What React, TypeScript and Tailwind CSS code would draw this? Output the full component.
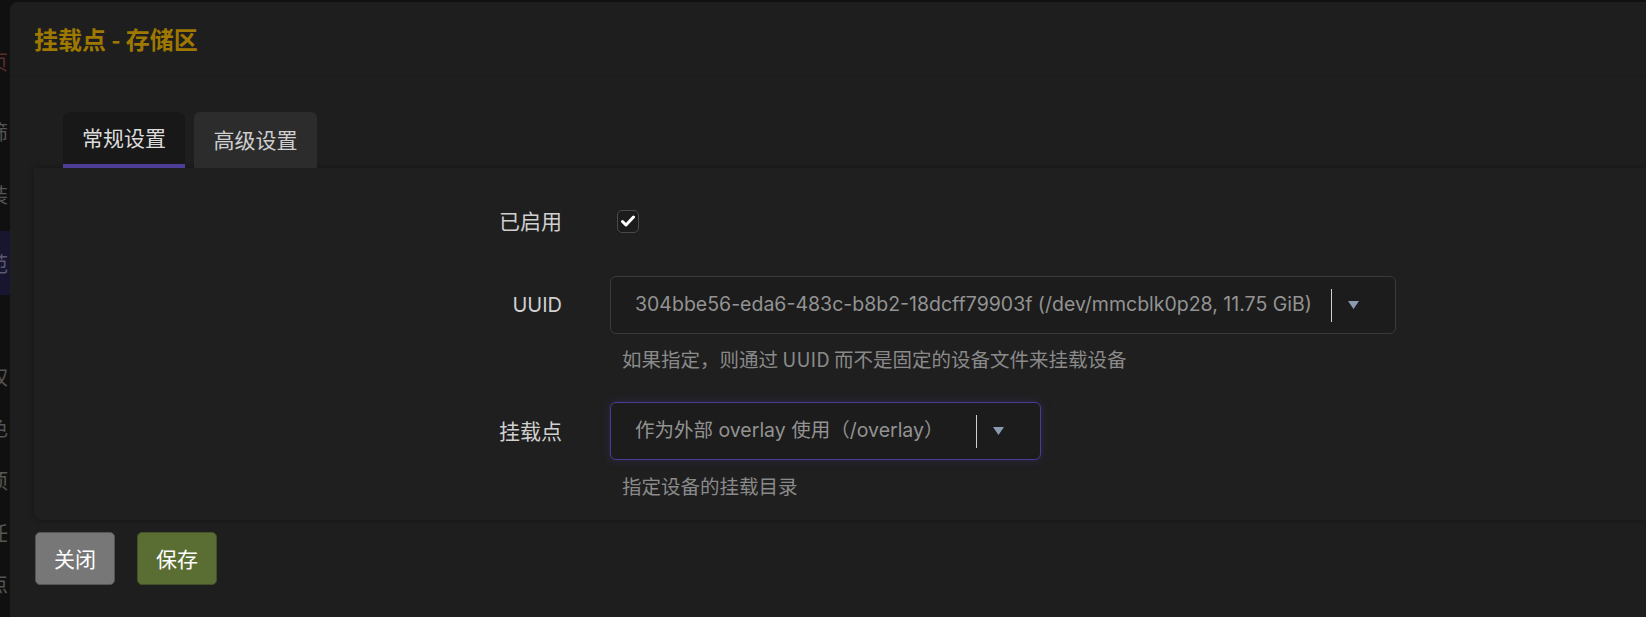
import React from 'react';

const cjk = "'Noto Sans CJK SC', 'Noto Sans', sans-serif";
const latin = "Inter, 'Noto Sans CJK SC', sans-serif";

// glyphs of the sidebar menu that peek out from under the modal
const sideItems: { ch: string; mt: number; color: string; active?: boolean }[] = [
  { ch: '页', mt: 49, color: '#5a2f2f' },
  { ch: '筛', mt: 48, color: '#555' },
  { ch: '装', mt: 41, color: '#555' },
  { ch: '范', mt: 25, color: '#5a5a6e', active: true },
  { ch: '权', mt: 71, color: '#555' },
  { ch: '色', mt: 29, color: '#555' },
  { ch: '项', mt: 31, color: '#555' },
  { ch: '任', mt: 30, color: '#555' },
  { ch: '点', mt: 29, color: '#555' },
];

const Arrow = () => (
  <svg width="11" height="8" viewBox="0 0 11 8">
    <polygon points="0,0 11,0 5.5,8" fill="#8a9ab3" />
  </svg>
);

const Select: React.FC<{ text: string; width: string; focused?: boolean }> = ({ text, width, focused }) => (
  <div
    className={`flex h-[58px] items-center rounded-[6px] border bg-[#1c1c1c] pl-[24px] ${width} ${
      focused ? 'border-[#4a3b96] shadow-[0_0_10px_rgba(74,59,150,0.35)]' : 'border-[#3a3a3a]'
    }`}
  >
    <span className="flex-1 truncate text-[19.5px] text-[#939393]" style={{ fontFamily: latin }}>
      {text}
    </span>
    <div className="h-[33px] w-px bg-[#d0d0d0]" />
    <div className="flex w-[63px] items-center pl-[16px]">
      <Arrow />
    </div>
  </div>
);

export default function App() {
  return (
    <div className="flex h-[617px] w-full overflow-hidden bg-[#101010]" style={{ fontFamily: cjk }}>
      {/* cut-off sidebar behind the modal */}
      <div className="flex w-[10px] shrink-0 flex-col overflow-hidden pt-[2px]">
        {sideItems.map((it, i) => (
          <div
            key={i}
            className={`-ml-[12px] text-[20px] leading-[22px] ${it.active ? 'bg-[#181530] pb-[20px] pt-[22px]' : ''}`}
            style={{ marginTop: it.mt, color: it.color }}
          >
            {it.ch}
          </div>
        ))}
      </div>

      <div className="mt-[2px] flex flex-1 flex-col rounded-tl-[8px] bg-[#1e1e1e]">
        <div className="flex h-[75px] items-center border-b border-[#1b1b1b] pl-[24px]">
          <h2 className="text-[24px] font-bold text-[#9f7800]">挂载点 - 存储区</h2>
        </div>

        <div className="pl-[24px] pt-[35px]">
          <div className="ml-[29px] flex gap-[9px]">
            <div className="flex h-[56px] w-[122px] flex-col rounded-t-[6px] bg-[#181818]">
              <div className="flex flex-1 items-center justify-center text-[21px] text-[#dcdcdc]">常规设置</div>
              <div className="h-[4px] bg-[#4e3e98]" />
            </div>
            <div className="flex h-[56px] w-[123px] items-center justify-center rounded-t-[6px] bg-[#2c2c2c] text-[21px] text-[#cfcfcf]">
              高级设置
            </div>
          </div>

          <div className="h-[352px] rounded-bl-[8px] bg-[#1f1f1f] pt-[24px] shadow-[0_0_6px_rgba(0,0,0,0.35)]">
            <div className="flex h-[58px] items-center">
              <div className="w-[528px] text-right text-[21px] text-[#d0d0d0]">已启用</div>
              <div className="ml-[55px] flex h-[23px] w-[22px] items-center justify-center rounded-[5px] border border-[#4a4a4a] bg-[#1c1c1c]">
                <svg width="14" height="12" viewBox="0 0 14 12">
                  <path d="M1.5 6.5 L5 10 L12.5 2" fill="none" stroke="#fff" strokeWidth="3" strokeLinecap="round" strokeLinejoin="round" />
                </svg>
              </div>
            </div>

            <div className="mt-[26px] flex items-center">
              <div className="w-[528px] text-right text-[20px] text-[#d0d0d0]" style={{ fontFamily: latin }}>
                UUID
              </div>
              <div className="ml-[48px]">
                <Select
                  width="w-[786px]"
                  text="304bbe56-eda6-483c-b8b2-18dcff79903f (/dev/mmcblk0p28, 11.75 GiB)"
                />
              </div>
            </div>
            <div className="ml-[588px] mt-[10px] text-[19.5px] leading-[30px] text-[#8a8a8a]">
              如果指定，则通过 UUID 而不是固定的设备文件来挂载设备
            </div>

            <div className="mt-[28px] flex items-center">
              <div className="w-[528px] text-right text-[21px] text-[#d0d0d0]">挂载点</div>
              <div className="ml-[48px]">
                <Select width="w-[431px]" text="作为外部 overlay 使用（/overlay）" focused />
              </div>
            </div>
            <div className="ml-[588px] mt-[11px] text-[19.5px] leading-[30px] text-[#8a8a8a]">指定设备的挂载目录</div>
          </div>

          <div className="mt-[12px] flex gap-[22px] pl-[1px]">
            <button className="flex h-[53px] w-[80px] items-center justify-center rounded-[5px] border border-[#555] bg-[#777] text-[21px] text-white">
              关闭
            </button>
            <button className="flex h-[53px] w-[80px] items-center justify-center rounded-[5px] border border-[#44522a] bg-[#5a6e33] text-[21px] text-white">
              保存
            </button>
          </div>
        </div>
      </div>
    </div>
  );
}
